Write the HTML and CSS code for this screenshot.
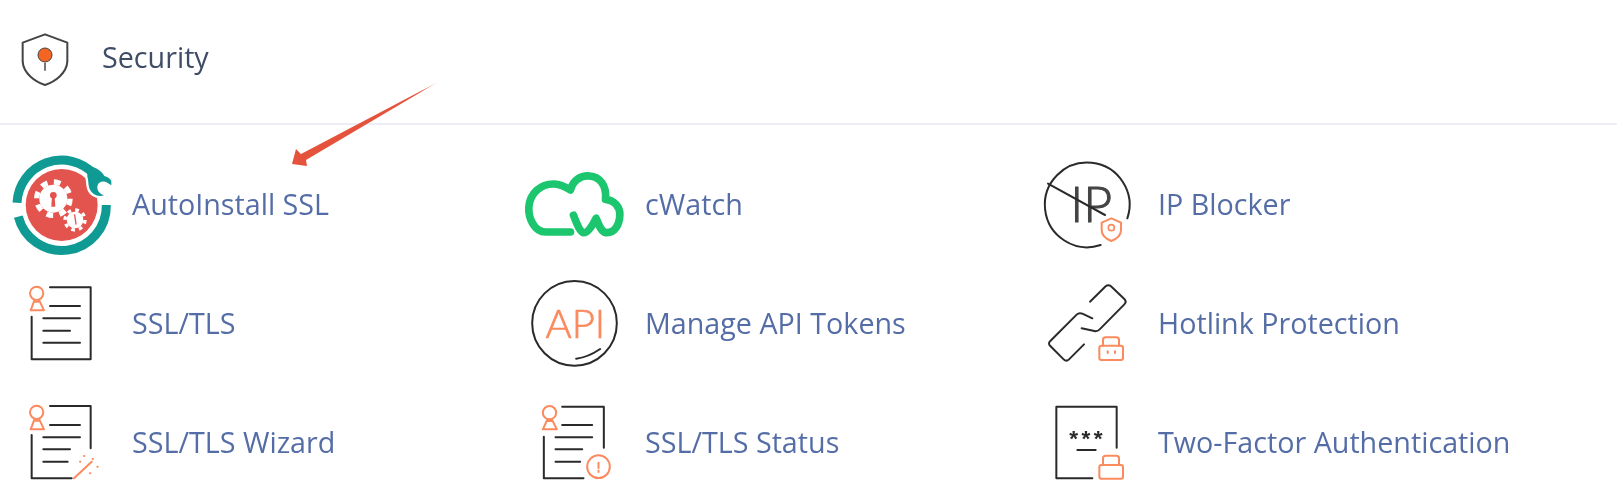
FILE: index.html
```html
<!DOCTYPE html>
<html lang="en">
<head>
  <meta charset="UTF-8">
  <title>Security</title>
  <link rel="stylesheet" href="styles.css">
</head>
<body>
  <div class="group-header">
    <svg class="group-icon" viewBox="30 81 180 180">
      <path class="shield" d="M135 103 L202 128 V185 C200 220 165 245 135 255 C105 245 70 220 68 185 V128 Z"/>
      <path class="stem" d="M135 188 V212"/>
      <circle class="pin" cx="135" cy="165" r="21"/>
    </svg>
    <h2>Security</h2>
  </div>

  <svg class="arrow" viewBox="0 0 460 190">
    <defs>
      <linearGradient id="arrow-fade" x1="1" y1="0" x2="0" y2="1">
        <stop offset="0" stop-color="#e5533d" stop-opacity="0.35"/>
        <stop offset="0.12" stop-color="#e5533d"/>
      </linearGradient>
    </defs>
    <path fill="url(#arrow-fade)" d="M438 82 L306 160 L307 166 L292 164 L296 149 L301 154 Z"/>
  </svg>

  <div class="items">
    <a class="item" href="#">
      <svg class="item-icon" viewBox="30 450 330 330">
        <circle class="red" cx="185" cy="615" r="108"/>
        <path class="wrench-edge" d="M262 498 C285 500 305 512 313 528 C322 530 330 535 334 543 L334 556 L322 548 C306 540 292 548 292 562 C292 574 300 582 312 586 C295 592 275 584 268 565 C264 552 266 540 262 530 Z"/>
        <path class="ring" d="M51 608 A134 134 0 0 1 283 523"/>
        <path class="ring" d="M55 650 A134 134 0 0 0 319 615"/>
        <path class="teal" d="M262 498 C285 500 305 512 313 528 C322 530 330 535 334 543 L334 556 L322 548 C306 540 292 548 292 562 C292 574 300 582 312 586 C295 592 275 584 268 565 C264 552 266 540 262 530 Z"/>
        <circle class="gear" cx="160" cy="596" r="42"/>
        <circle class="gear-teeth" cx="160" cy="596" r="50" stroke-dasharray="20 19.3"/>
        <circle class="red" cx="160" cy="586" r="10"/>
        <path class="red" d="M156 589 H164 L166 620 H154 Z"/>
        <circle class="gear" cx="225" cy="660" r="25"/>
        <circle class="gear-teeth small" cx="225" cy="660" r="30" stroke-dasharray="11 12.5"/>
        <path class="key-mark" d="M224 645 L228 672"/>
      </svg>
      <span>AutoInstall SSL</span>
    </a>

    <a class="item" href="#">
      <svg class="item-icon" viewBox="40.5 0 330 330">
        <path class="cloud" d="M183 246 H108 C75 246 56 205 58 172 C60 130 95 100 135 102 C155 103 170 112 183 120 C190 90 215 76 240 78 C270 80 292 105 288 148 C315 150 332 172 331 195 C330 225 315 250 290 248 C275 246 268 225 260 205 C250 225 235 250 222 248 C210 245 200 215 192 196"/>
      </svg>
      <span>cWatch</span>
    </a>

    <a class="item" href="#">
      <svg class="item-icon" viewBox="21 0 330 330">
        <path class="line" d="M295 205 A127 127 0 1 0 215 285"/>
        <text class="icon-text ink-text" x="124" y="215" font-size="150">IP</text>
        <path class="line" d="M57 101 L228 195"/>
        <path class="accent" d="M247 205 L276 218 V240 C276 255 262 267 247 273 C232 267 218 255 218 240 V218 Z"/>
        <circle class="accent thin" cx="247" cy="233" r="9"/>
      </svg>
      <span>IP Blocker</span>
    </a>

    <a class="item" href="#">
      <svg class="item-icon" viewBox="30 27 330 330">
        <path class="line" d="M150 82 H272 V298 H95 V170"/>
        <path class="line" d="M150 138 H240 M130 175 H240 M130 212 H210 M130 248 H240"/>
        <circle class="accent" cx="110" cy="100" r="20"/>
        <path class="accent" d="M103 122 L92 151 H132 L118 122 M103 125 H118"/>
      </svg>
      <span>SSL/TLS</span>
    </a>

    <a class="item" href="#">
      <svg class="item-icon" viewBox="40.5 357 330 330">
        <circle class="line" cx="195" cy="520" r="127"/>
        <path class="line" d="M200 626 C225 623 250 612 272 597"/>
        <text class="icon-text accent-text" x="108" y="564" font-size="120">API</text>
      </svg>
      <span>Manage API Tokens</span>
    </a>

    <a class="item" href="#">
      <svg class="item-icon" viewBox="21 357 330 330">
        <path class="line" d="M183 455 L230 409 Q238 402 246 409 L286 447 Q294 455 286 463 L212 538 Q205 545 196 543 L158 535"/>
        <path class="line" d="M190 505 L160 491 Q150 487 143 494 L64 573 Q56 580 64 588 L104 628 Q112 636 120 628 L165 583"/>
        <rect class="accent" x="211" y="587" width="71" height="43" rx="6"/>
        <path class="accent" d="M222 587 V570 Q222 562 230 562 H262 Q270 562 270 570 V587"/>
        <path class="accent" d="M236 604 V609 M258 604 V609"/>
      </svg>
      <span>Hotlink Protection</span>
    </a>

    <a class="item" href="#">
      <svg class="item-icon" viewBox="30 384 330 330">
        <path class="line" d="M150 438 H272 V565 M215 655 H95 V525"/>
        <path class="line" d="M150 495 H240 M130 532 H240 M130 568 H210 M130 605 H203"/>
        <circle class="accent" cx="110" cy="457" r="20"/>
        <path class="accent" d="M103 479 L92 508 H132 L118 479 M103 482 H118"/>
        <path class="accent" d="M222 655 L275 605"/>
        <path class="accent dots" d="M240 605 h1 M252 588 h1 M278 597 h1 M292 620 h1 M270 640 h1"/>
      </svg>
      <span>SSL/TLS Wizard</span>
    </a>

    <a class="item" href="#">
      <svg class="item-icon" viewBox="40.5 714 330 330">
        <path class="line" d="M158 770 H283 V893 M222 985 H103 V860"/>
        <path class="line" d="M158 825 H248 M138 862 H248 M138 898 H218 M138 935 H212"/>
        <circle class="accent" cx="120" cy="788" r="20"/>
        <path class="accent" d="M113 810 L100 838 H142 L128 810 M113 813 H128"/>
        <circle class="accent" cx="267" cy="950" r="34"/>
        <path class="accent" d="M267 938 V954 M267 962 V966"/>
      </svg>
      <span>SSL/TLS Status</span>
    </a>

    <a class="item" href="#">
      <svg class="item-icon" viewBox="21 714 330 330">
        <path class="line" d="M190 985 H82 V770 H263 V893"/>
        <text class="stars" x="121" y="889" font-size="68">***</text>
        <path class="line" d="M145 900 H200"/>
        <rect class="accent" x="211" y="945" width="71" height="41" rx="6"/>
        <path class="accent" d="M222 945 V925 Q222 917 230 917 H262 Q270 917 270 925 V945"/>
      </svg>
      <span>Two-Factor Authentication</span>
    </a>
  </div>
</body>
</html>
```

FILE: styles.css
```css
html {
  overflow: hidden;
}
body {
  margin: 0;
  background-color: #fff;
  font-family: 'Open Sans', sans-serif;
  position: relative;
}
.group-header {
  display: flex;
  align-items: center;
  gap: 32px;
  height: 60px;
  padding: 27px 0 36px 10px;
  border-bottom: 2px solid #eeeef8;
}
.group-header h2 {
  margin: 0 0 2px;
  font-size: 28.7px;
  font-weight: 400;
  color: #3f4e66;
  filter: blur(0.4px);
}
.group-icon {
  width: 60px;
  height: 60px;
  filter: blur(0.4px);
}
.arrow {
  position: absolute;
  left: 0;
  top: 0;
  width: 460px;
  height: 190px;
}
.items {
  display: grid;
  grid-template-columns: repeat(3, 513px);
  grid-auto-rows: 110px;
  row-gap: 9px;
  padding: 25px 0 0 10px;
  filter: blur(0.4px);
}
.item {
  display: flex;
  align-items: center;
  gap: 12px;
  font-size: 28.7px;
  color: #556da6;
  text-decoration: none;
}
.item span {
  padding-bottom: 4px;
}
.item-icon {
  width: 110px;
  height: 110px;
  flex-shrink: 0;
}

/* icon parts, drawn in the 3x units of the viewBox */
.item-icon * {
  fill: none;
  stroke-linecap: round;
  stroke-linejoin: round;
}
.line {
  stroke: #2a2a2a;
  stroke-width: 6;
}
.accent {
  stroke: #fb8a5e;
  stroke-width: 6;
}
.accent.thin {
  stroke-width: 5;
}
.accent.dots {
  stroke-width: 6;
}
.cloud {
  stroke: #1cc66e;
  stroke-width: 23;
}
.item-icon .icon-text {
  font-family: 'Lato', sans-serif;
  font-weight: 300;
}
.item-icon .accent-text {
  fill: #fb8a5e;
  stroke: #fb8a5e;
  stroke-width: 2;
}
.item-icon .ink-text {
  fill: #444;
  stroke: #444;
  stroke-width: 3;
}
.item-icon .stars {
  fill: #2a2a2a;
  font-family: 'Liberation Sans', sans-serif;
  font-weight: 700;
  letter-spacing: 10px;
}
.item-icon .red {
  fill: #e4544f;
}
.item-icon .teal {
  fill: #0f9a94;
}
.item-icon .wrench-edge {
  fill: #fff;
  stroke: #fff;
  stroke-width: 14;
}
.item-icon .gear {
  fill: #fff;
}
.item-icon .gear-teeth {
  stroke: #fff;
  stroke-width: 16;
  stroke-linecap: butt;
}
.item-icon .gear-teeth.small {
  stroke-width: 10;
}
.item-icon .key-mark {
  stroke: #e4544f;
  stroke-width: 4;
}
.item-icon .ring {
  stroke: #0f9a94;
  stroke-width: 27;
  stroke-linecap: butt;
}

.shield {
  fill: none;
  stroke: #444;
  stroke-width: 6;
  stroke-linejoin: round;
}
.stem {
  stroke: #777;
  stroke-width: 6;
}
.pin {
  fill: #f26522;
  stroke: #444;
  stroke-width: 3;
}
```
